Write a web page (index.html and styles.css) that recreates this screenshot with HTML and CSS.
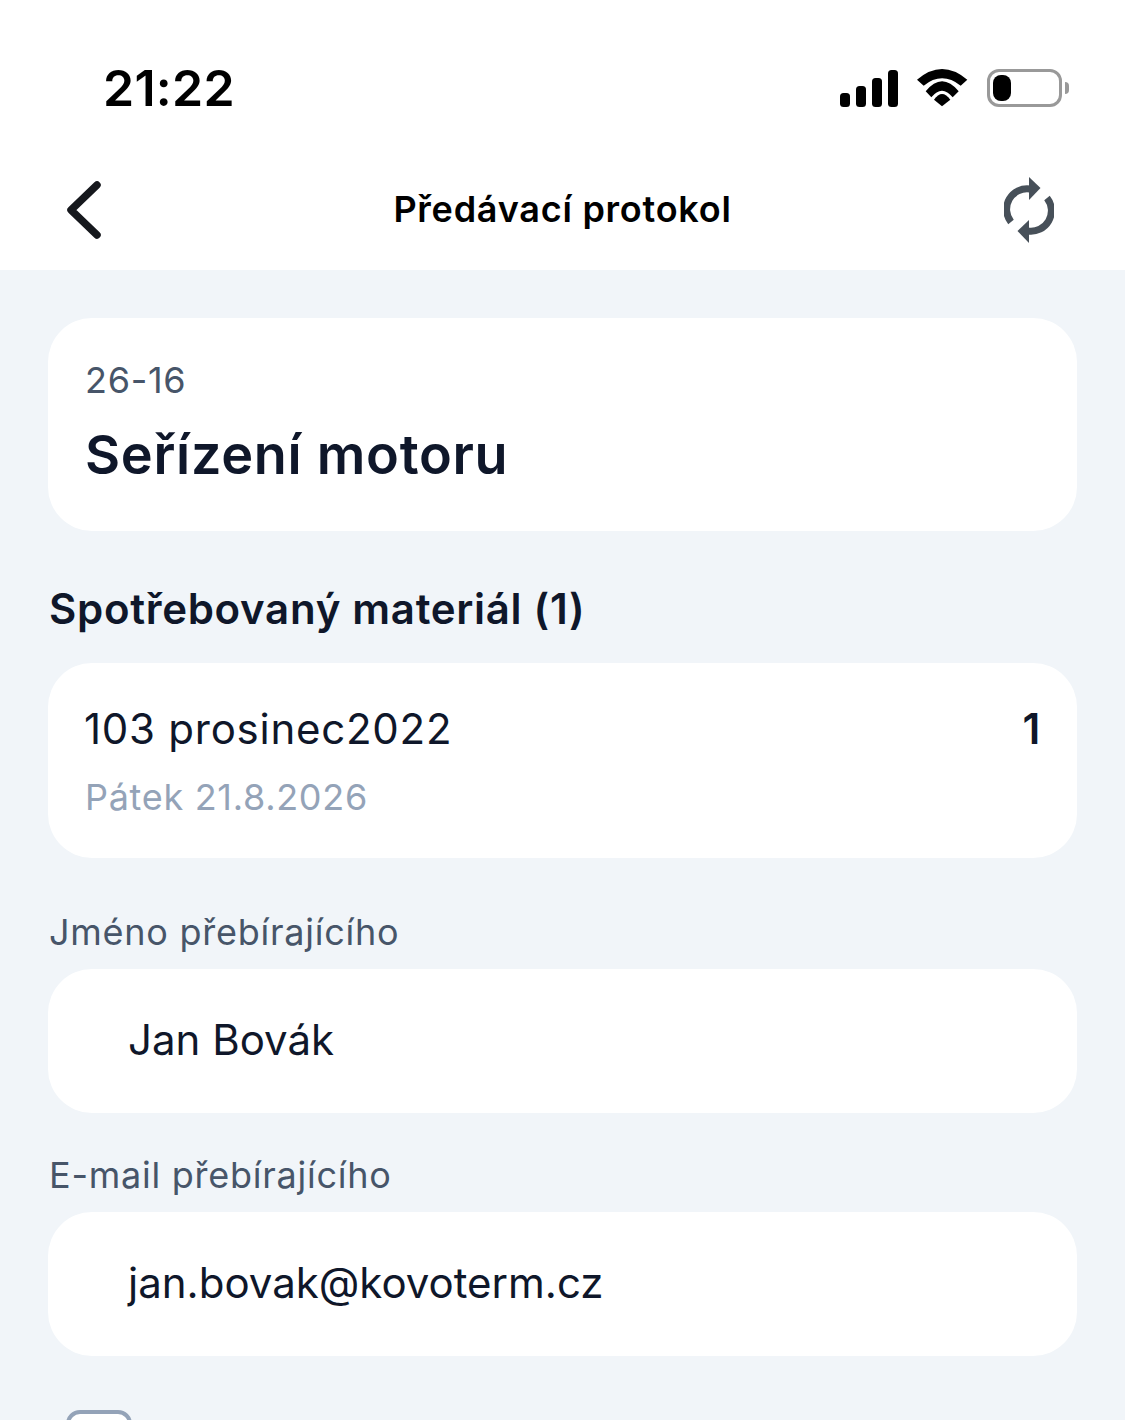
FILE: index.html
```html
<!DOCTYPE html>
<html lang="cs">
<head>
    <meta charset="UTF-8">
    <title>Předávací protokol</title>
    <link rel="stylesheet" href="styles.css">
</head>
<body>

    <!-- Status Bar -->
    <div class="status-bar">
        <span class="time">21:22</span>
        <div class="status-icons">
            <svg class="signal" width="58" height="37" viewBox="0 0 58 37">
                <rect x="0" y="23" width="10" height="14" rx="3.5"/>
                <rect x="16" y="16" width="10" height="21" rx="3.5"/>
                <rect x="32" y="8" width="10" height="29" rx="3.5"/>
                <rect x="48" y="0" width="10" height="37" rx="3.5"/>
            </svg>
            <svg class="wifi" width="51" height="38" viewBox="0 0 51 38">
                <path d="M0 10.700 Q25 -10.700 50.300 10.700 L43.700 16.700 Q25 1.900 6.700 16.700 Z"/>
                <path d="M8.700 22.300 Q25 2.300 41.700 22.300 L35.700 28.300 Q25 15.100 14.300 28.300 Z"/>
                <path d="M17 30.700 Q25 19.300 33.300 30.700 L25 37.300 Z"/>
            </svg>
            <div class="battery">
                <div class="battery-body"><div class="battery-level"></div></div>
                <div class="battery-cap"></div>
            </div>
        </div>
    </div>

    <!-- Header -->
    <header class="top-nav">
        <svg class="back" width="36" height="60" viewBox="0 0 36 60">
            <path d="M31 5 L5 30 L31 55"/>
        </svg>
        <h1>Předávací protokol</h1>
        <svg class="refresh" width="50" height="66" viewBox="0 0 50 66">
            <path class="arc" d="M7 45 A20.500 20.500 0 0 1 26 12"/>
            <path class="arrow" d="M25 0 L36.500 11 L25 23 Z"/>
            <path class="arc" d="M43 21 A20.500 20.500 0 0 1 24 54"/>
            <path class="arrow" d="M25 43 L13.500 54 L25 66 Z"/>
        </svg>
    </header>

    <!-- Main Content -->
    <main class="content">
        <section class="card job-card">
            <div class="job-code">26-16</div>
            <div class="job-name">Seřízení motoru</div>
        </section>

        <h2 class="section-title">Spotřebovaný materiál (1)</h2>
        <section class="card material-card">
            <div class="material-row">
                <span>103 prosinec2022</span>
                <span class="material-count">1</span>
            </div>
            <div class="material-date">Pátek 21.8.2026</div>
        </section>

        <label class="field-label label-name">Jméno přebírajícího</label>
        <div class="card field">Jan Bovák</div>

        <label class="field-label label-mail">E-mail přebírajícího</label>
        <div class="card field">jan.bovak@kovoterm.cz</div>

        <div class="checkbox"></div>
    </main>
</body>
</html>
```

FILE: styles.css
```css
/* === Global Styles === */
* {
    box-sizing: border-box;
}

html, body {
    height: 1420px;
    overflow: hidden;
}

body {
    margin: 0;
    background: #f1f5f9;
    color: #0f172a;
    font-family: Inter, "Noto Sans", sans-serif;
    font-optical-sizing: none;
}

/* === Status bar === */
.status-bar {
    height: 150px;
    background: #fff;
    display: flex;
    justify-content: space-between;
    align-items: center;
    padding: 26px 56px 0 103px;
    color: #000;
}

.time {
    font-size: 50px;
    font-weight: 600;
    letter-spacing: 0.25px;
}

.status-icons {
    display: flex;
    align-items: center;
    gap: 19px;
}

.status-icons svg {
    display: block;
    fill: #000;
}

.battery {
    display: flex;
    align-items: center;
    gap: 3px;
}

.battery-body {
    width: 75px;
    height: 38px;
    border: 3px solid #999;
    border-radius: 12px;
    padding: 3px;
}

.battery-level {
    width: 18px;
    height: 100%;
    background: #000;
    border-radius: 8px;
}

.battery-cap {
    width: 4px;
    height: 12px;
    background: #999;
    border-radius: 0 4px 4px 0;
}

/* === Header === */
.top-nav {
    height: 120px;
    background: #fff;
    display: grid;
    grid-template-columns: 1fr auto 1fr;
    align-items: center;
    padding: 0 71px 0 66px;
}

.top-nav h1 {
    margin: 0 0 2px 5px;
    font-size: 36px;
    font-weight: 600;
    letter-spacing: 0.75px;
    color: #000;
}

.back {
    fill: none;
    stroke: #16181d;
    stroke-width: 7.500;
    stroke-linecap: round;
    stroke-linejoin: round;
}

.refresh {
    justify-self: end;
}

.refresh .arc {
    fill: none;
    stroke: #475059;
    stroke-width: 7;
}

.refresh .arrow {
    fill: #475059;
}

/* === Content === */
.content {
    padding: 48px 48px 0;
}

.card {
    background: #fff;
    border-radius: 44px;
}

.job-card {
    height: 213px;
    padding: 38px 37px 0;
}

.job-code {
    font-size: 36px;
    line-height: 48px;
    letter-spacing: 0.7px;
    color: #475569;
}

.job-name {
    margin-top: 19px;
    font-size: 54px;
    line-height: 64px;
    font-weight: 600;
    letter-spacing: 0.7px;
}

.section-title {
    margin: 52px 0 28px 1px;
    font-size: 42px;
    line-height: 52px;
    font-weight: 600;
    letter-spacing: 0.7px;
}

.material-card {
    height: 195px;
    padding: 40px 36px 0 36px;
}

.material-row {
    display: flex;
    justify-content: space-between;
    font-size: 42px;
    line-height: 52px;
    letter-spacing: 0.75px;
}

.material-count {
    font-weight: 600;
}

.material-date {
    margin-top: 19px;
    padding-left: 1px;
    font-size: 36px;
    line-height: 46px;
    letter-spacing: 0.7px;
    color: #94a3b8;
}

.field-label {
    display: block;
    margin-left: 1px;
    font-size: 36px;
    line-height: 44px;
    letter-spacing: 0.75px;
    color: #475569;
}

.label-name {
    margin-top: 52px;
    margin-bottom: 15px;
}

.label-mail {
    margin-top: 40px;
    margin-bottom: 15px;
}

.field {
    height: 144px;
    display: flex;
    align-items: center;
    padding: 0 0 3px 80px;
    font-size: 42px;
}

.checkbox {
    width: 66px;
    height: 66px;
    margin: 54px 0 0 18px;
    background: #fff;
    border: 4px solid #94a3b8;
    border-radius: 14px;
}
```
